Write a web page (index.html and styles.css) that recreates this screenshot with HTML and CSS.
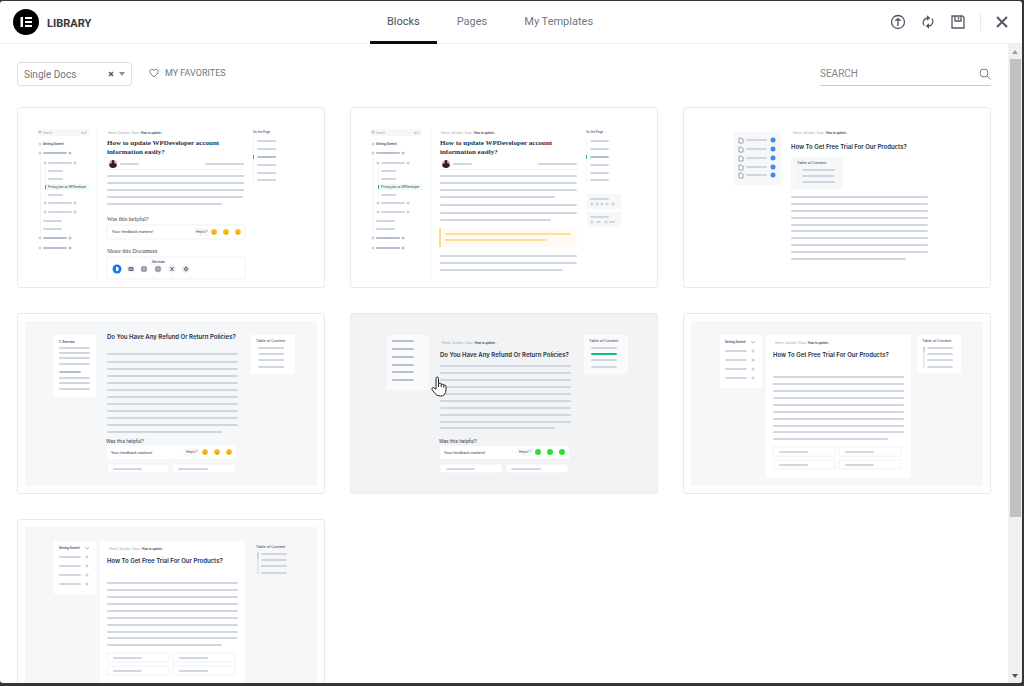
FILE: index.html
```html
<!DOCTYPE html>
<html lang="en">
<head>
<meta charset="utf-8">
<title>Library</title>
<link rel="stylesheet" href="styles.css">
</head>
<body>
<svg class="defs" aria-hidden="true">
  <symbol id="crumbs" viewBox="0 0 60 8" overflow="visible">
    <text class="tiny muted" x="0" y="5">Home / Articles / Docs /</text>
    <text class="tiny strong" x="33" y="5">How to update...</text>
  </symbol>
  <symbol id="emoji" viewBox="0 0 8 8">
    <circle cx="4" cy="4" r="3" fill="currentColor"/>
    <path class="face" d="M3 3v.6M5 3v.6M2.8 5q1.2 1 2.4 0"/>
  </symbol>
  <symbol id="doc-side" viewBox="0 0 292 165">
    <rect class="tint" x="12" y="14" width="52" height="7"/>
    <circle class="ring" cx="15" cy="17" r="1"/>
    <text class="tiny muted" x="18" y="19">Search</text>
    <text class="tiny muted" x="56" y="19">⌘ K</text>
    <path class="dots" d="M15 29h0M15 38h0M20 48h0M20 88h0M20 97h0M15 123h0M15 133h0"/>
    <text class="tiny strong" x="18" y="30">Getting Started</text>
    <path class="bar dark" d="M19 38h22M19 123h22M19 133h22"/>
    <path class="dots dark" d="M45 38h0M45 123h0M45 133h0"/>
    <path class="bar" d="M24 48h22M24 56h13M24 64h13M24 80h13M24 88h22M24 97h22M19 106h17M19 114h17"/>
    <path class="dots" d="M50 48h0M50 88h0M50 97h0"/>
    <path class="rule" d="M20.500 51v31M15.500 42v77M72.500 14v151"/>
    <rect class="green-tint" x="20" y="69" width="44" height="6"/>
    <rect class="green" x="20" y="70" width="1" height="4"/>
    <text class="tiny green-text" x="23" y="73">Pricing plan as WPDeveloper</text>
    <use href="#crumbs" x="83" y="14" width="60" height="8"/>
    <text class="serif title" x="82" y="30">How to update WPDeveloper account</text>
    <text class="serif title" x="82" y="39">information easily?</text>
    <circle cx="88" cy="49" r="4" fill="#f3a5ab"/>
    <path d="M84 50q1-2 3-2-1-3 1-3t1 3q2 0 3 2-1 3-4 3t-4-3z" fill="#2b2230"/>
    <path class="bar" d="M96 49h17M181 49h37"/>
    <path class="rule" d="M82 54.500h137"/>
    <text class="tiny" x="228" y="18">On this Page</text>
    <path class="bar" d="M233 26h17M233 34h17M233 50h17M233 58h17M233 65h17"/>
    <path class="bar dark" d="M233 42h17"/>
    <path class="rule" d="M228.500 23v44"/>
    <rect class="green" x="228" y="40" width="1" height="4"/>
  </symbol>
  <symbol id="feedback" viewBox="0 0 140 50" overflow="visible">
    <text class="sub" x="0" y="6">Was this helpful?</text>
    <rect class="paper" x="1" y="9" width="129" height="13"/>
    <text class="small" x="5" y="17">Your feedback matters!</text>
    <rect class="tip" x="78" y="12" width="15" height="6" rx="1"/>
    <text class="tiny" x="80" y="16">Helpful ?</text>
    <use href="#emoji" x="95" y="11" width="8" height="8"/>
    <use href="#emoji" x="107" y="11" width="8" height="8"/>
    <use href="#emoji" x="119" y="11" width="8" height="8"/>
    <rect class="paper edge" x="1" y="27" width="62" height="9" rx="1"/>
    <rect class="paper edge" x="67" y="27" width="62" height="9" rx="1"/>
    <path class="bar" d="M8 32h27M73 32h28"/>
  </symbol>
  <symbol id="trial-doc" viewBox="0 0 292 165">
    <rect class="tint" width="292" height="165"/>
    <rect class="paper" x="29" y="14" width="42" height="53"/>
    <text class="tiny strong" x="34" y="22">Getting Started</text>
    <path class="ring" d="M60 20l2 2 2-2"/>
    <path class="bar" d="M35 30h20M35 39h20M35 48h20M35 57h20"/>
    <path class="dots" d="M62 30h0M62 39h0M62 48h0M62 57h0"/>
    <rect class="paper" x="75" y="14" width="145" height="143"/>
    <use href="#crumbs" x="84" y="18" width="60" height="8"/>
    <text class="title" x="82" y="36">How To Get Free Trial For Our Products?</text>
    <path class="bar" d="M83 56h129M83 63h129M83 70h129M83 77h129M83 84h129M83 91h129M83 98h129M83 105h129M83 111h129M83 118h113"/>
    <rect class="paper edge" x="82" y="126" width="62" height="9" rx="1"/>
    <rect class="paper edge" x="148" y="126" width="62" height="9" rx="1"/>
    <rect class="paper edge" x="82" y="139" width="62" height="9" rx="1"/>
    <rect class="paper edge" x="148" y="139" width="62" height="9" rx="1"/>
    <path class="bar" d="M89 131h27M155 131h27M89 144h27M155 144h27"/>
  </symbol>
  <symbol id="side-toc" viewBox="0 0 292 165">
    <text class="small" x="231" y="21">Table of Content</text>
    <path class="bar" d="M237 27h24M237 33h24M237 39h24M237 46h24"/>
    <path class="bar thin" d="M233 26v21"/>
    <path class="bar thin dark" d="M233 26v5"/>
  </symbol>
</svg>

<main class="modal">
  <header class="header">
    <div class="brand">
      <svg class="logo" viewBox="0 0 26 26" aria-hidden="true"><circle cx="13" cy="13" r="13"/><path d="M7.500 8h2.500v10H7.500zM12 8h7v2h-7zM12 12h7v2h-7zM12 16h7v2h-7z" fill="#fff"/></svg>
      <h1 class="brand-name">LIBRARY</h1>
    </div>
    <nav class="tabs">
      <a class="tab active" href="#blocks" aria-current="page">Blocks</a>
      <a class="tab" href="#pages">Pages</a>
      <a class="tab" href="#templates">My Templates</a>
    </nav>
    <div class="actions">
      <button class="icon-btn" aria-label="Import template"><svg viewBox="0 0 16 16"><circle cx="8" cy="8" r="6.500"/><path d="M8 12V5M6 6.200L8 4.500l2 1.700z"/></svg></button>
      <button class="icon-btn" aria-label="Sync library"><svg viewBox="0 0 16 16"><path d="M4 11.500C2 8.500 3.500 4.500 7.500 4M12 4.500c2 3 .5 7-3.500 7.500"/><path class="solid" d="M7 1.200v5.600L10.300 4zM9 9.200v5.600L5.700 12z"/></svg></button>
      <button class="icon-btn" aria-label="Save template"><svg viewBox="0 0 16 16"><path d="M2 2h10.500L14 3.500V14H2zM5 2v5h6V2M8.500 3v2.500"/></svg></button>
      <button class="icon-btn close" aria-label="Close"><svg viewBox="0 0 16 16"><path d="M3 3l10 10M13 3L3 13"/></svg></button>
    </div>
  </header>

  <div class="body">
    <div class="content">
      <div class="filters">
        <div class="picker">
          <select class="picker-select" aria-label="Category"><option>Single Docs</option></select>
          <button class="clear" aria-label="Clear category"><svg viewBox="0 0 6 6"><path d="M1 1l4 4M5 1L1 5"/></svg></button>
          <svg class="caret" viewBox="0 0 6 4" aria-hidden="true"><path d="M0 0h6L3 4z"/></svg>
        </div>
        <button class="favorites"><svg viewBox="0 0 10 10" aria-hidden="true"><path d="M5 8.800C-1 4.500.8 1.300 2.800 1.300 4 1.300 4.700 2 5 2.700 5.300 2 6 1.300 7.200 1.300 9.200 1.300 11 4.500 5 8.800z"/></svg>MY FAVORITES</button>
        <div class="search">
          <input class="search-input" type="search" placeholder="SEARCH" aria-label="Search">
          <svg viewBox="0 0 12 12" aria-hidden="true"><circle cx="5" cy="5" r="4"/><path d="M8 8l3.500 3.500"/></svg>
        </div>
      </div>

      <div class="grid">
        <button class="card" aria-label="Documentation with feedback and sharing">
          <svg class="thumb" viewBox="0 0 292 165">
            <use href="#doc-side" width="292" height="165"/>
            <path class="bar" d="M83 61h135M83 68h135M83 75h135M83 82h134M83 89h113"/>
            <text class="serif heading" x="82" y="106">Was this helpful?</text>
            <rect class="edge" x="82" y="110" width="138" height="14" rx="1"/>
            <text class="small" x="87" y="118">Your feedback matters!</text>
            <rect class="tip" x="169" y="114" width="15" height="6" rx="1"/>
            <text class="tiny" x="171" y="118">Helpful ?</text>
            <use class="yellow" href="#emoji" x="185" y="113" width="8" height="8"/>
            <use class="yellow" href="#emoji" x="197" y="113" width="8" height="8"/>
            <use class="yellow" href="#emoji" x="209" y="113" width="8" height="8"/>
            <text class="serif heading" x="82" y="138">Share this Document</text>
            <rect class="edge" x="82" y="142" width="138" height="22" rx="1"/>
            <circle cx="92" cy="154" r="4.500" fill="#1877f2"/>
            <path d="M91 152h2v1h1l-1 3h-2z" fill="#fff"/>
            <g class="share-icons">
              <circle cx="106" cy="154" r="4"/><circle cx="119" cy="154" r="4"/><circle cx="133" cy="154" r="4"/><circle cx="147" cy="154" r="4"/><circle cx="161" cy="154" r="4"/>
              <path d="M104 152.500h4v3h-4zM104 154h4M117 152h4v4h-4zM119 153v2M131 152h4v4h-4zM132 155l2-2M145.500 152l3 4M148.500 152l-3 4M159 154q2-4 4 0-2 4-4 0M161 153v2"/>
            </g>
            <rect class="tip" x="126" y="145" width="14" height="4" rx="1"/>
            <text class="tiny strong" x="127" y="148">See more</text>
          </svg>
        </button>

        <button class="card" aria-label="Documentation with callout">
          <svg class="thumb" viewBox="0 0 292 165">
            <use href="#doc-side" width="292" height="165"/>
            <path class="bar" d="M83 61h135M83 68h135M83 75h135M83 82h113M83 90h135M83 98h135M83 105h109M83 141h135M83 148h135M83 155h121"/>
            <rect x="81" y="113" width="138" height="19" fill="#fffbf2"/>
            <rect x="81" y="113" width="2" height="19" fill="#ffd98a"/>
            <path class="bar amber" d="M88 119h124M88 125h100"/>
            <rect class="tint" x="229" y="79" width="34" height="15"/>
            <rect class="tint" x="229" y="97" width="34" height="15"/>
            <path class="bar" d="M233 84h17M233 102h17M239 107h3M252 107h4"/>
            <path class="dots" d="M234 89h0M239 89h0M244 89h0M249 89h0M255 89h0M234 107h0M248 107h0"/>
          </svg>
        </button>

        <button class="card" aria-label="Documentation with contents box">
          <svg class="thumb" viewBox="0 0 292 165">
            <rect class="tint" x="43" y="17" width="47" height="53"/>
            <path class="folder" d="M48 23h2l1 1h1v4h-4zM48 32h2l1 1h1v4h-4zM48 41h2l1 1h1v4h-4zM48 50h2l1 1h1v4h-4zM48 58h2l1 1h1v4h-4z"/>
            <path class="bar" d="M56 25h19M56 34h19M56 43h19M56 52h19M56 60h19"/>
            <path class="dots blue" d="M82 25h0M82 34h0M82 43h0M82 52h0M82 60h0"/>
            <use href="#crumbs" x="102" y="14" width="60" height="8"/>
            <text class="title" x="100" y="34">How To Get Free Trial For Our Products?</text>
            <rect class="tint" x="100" y="42" width="52" height="32"/>
            <text class="small" x="106" y="49">Table of Content</text>
            <path class="bar" d="M112 55h31M112 61h31M112 67h31"/>
            <path class="bar thin" d="M108 55h0M108 61h0M108 67h0"/>
            <path class="bar" d="M101 82h135M101 89h135M101 96h135M101 103h135M101 110h135M101 116h135M101 123h135M101 130h135M101 137h135M101 144h113"/>
          </svg>
        </button>

        <button class="card" aria-label="Refund policies with overview">
          <svg class="thumb" viewBox="0 0 292 165">
            <rect class="tint" width="292" height="165"/>
            <rect class="paper" x="29" y="14" width="42" height="62"/>
            <text class="tiny strong" x="34" y="22">2. Overview</text>
            <path class="bar" d="M35 27h29M35 32h29M35 37h29M35 43h29M35 57h29M35 62h29M35 68h29"/>
            <path class="bar dark" d="M35 51h20"/>
            <text class="title" x="82" y="18">Do You Have Any Refund Or Return Policies?</text>
            <path class="bar" d="M83 33h129M83 41h129M83 48h129M83 55h129M83 62h129M83 69h129M83 76h129M83 83h129M83 90h129M83 97h129M83 104h129M83 111h113"/>
            <use class="yellow" href="#feedback" x="81" y="116" width="140" height="50"/>
            <rect class="paper" x="226" y="14" width="44" height="39"/>
            <text class="small" x="231" y="21">Table of Content</text>
            <path class="bar" d="M234 27h24M234 33h24M234 39h24M234 46h24"/>
          </svg>
        </button>

        <button class="card hovered" aria-label="Refund policies with breadcrumbs">
          <svg class="thumb" viewBox="0 0 292 165">
            <rect class="paper" x="29" y="14" width="42" height="55"/>
            <path class="bar dark" d="M35 20h20M35 28h20M35 36h20M35 44h20M35 51h20M35 59h20"/>
            <use href="#crumbs" x="84" y="18" width="60" height="8"/>
            <text class="title" x="82" y="36">Do You Have Any Refund Or Return Policies?</text>
            <path class="bar" d="M83 45h129M83 52h129M83 59h129M83 66h129M83 73h129M83 80h129M83 87h129M83 94h129M83 101h129M83 107h113"/>
            <use class="lime" href="#feedback" x="81" y="116" width="140" height="50"/>
            <rect class="paper" x="226" y="14" width="44" height="39"/>
            <text class="small" x="231" y="21">Table of Content</text>
            <path class="bar" d="M234 27h24M234 39h24M234 46h24"/>
            <path class="bar active-bar" d="M234 33h24"/>
          </svg>
          <svg class="pointer" viewBox="0 0 16 21" aria-hidden="true"><path d="M5 13V2.500Q5 1 6.200 1T7.500 2.500V7.500Q10 6.500 10.200 8.300 12.400 7.500 12.700 9.200 15 8.500 15 10.500V14Q14.500 20 9.500 20 5.500 20 4 17.500L1 13.500Q.5 11.500 2.500 11.500L5 13.500M7.500 7.500V11M10.200 8.300V11M12.700 9.200V11.500"/></svg>
        </button>

        <button class="card" aria-label="Free trial with boxed contents">
          <svg class="thumb" viewBox="0 0 292 165">
            <use href="#trial-doc" width="292" height="165"/>
            <rect class="paper" x="226" y="14" width="44" height="38"/>
            <use href="#side-toc" width="292" height="165"/>
          </svg>
        </button>

        <button class="card" aria-label="Free trial with plain contents">
          <svg class="thumb" viewBox="0 0 292 165">
            <use href="#trial-doc" width="292" height="165"/>
            <use href="#side-toc" width="292" height="165"/>
          </svg>
        </button>
      </div>
    </div>
    <div class="scrollbar" aria-hidden="true">
      <svg class="arrow up" viewBox="0 0 6 4"><path d="M0 4h6L3 0z"/></svg>
      <div class="track"><div class="thumb-bar"></div></div>
      <svg class="arrow" viewBox="0 0 6 4"><path d="M0 0h6L3 4z"/></svg>
    </div>
  </div>
</main>
</body>
</html>
```
FILE: styles.css
```css
* { box-sizing: border-box; }

body {
  margin: 0;
  height: 100vh;
  padding: 1px 2px 3px 0;
  background: #343536;
  font-family: Roboto, "Liberation Sans", sans-serif;
  color: #6d7882;
  overflow: hidden;
}

button {
  font: inherit;
  color: inherit;
  background: none;
  border: 0;
  padding: 0;
  cursor: pointer;
}

.defs { position: absolute; width: 0; height: 0; }

.modal {
  display: flex;
  flex-direction: column;
  height: 100%;
  background: #fff;
  border-radius: 3px;
  overflow: hidden;
}

/* Header */
.header {
  display: grid;
  grid-template-columns: 36% auto 1fr;
  flex: none;
  height: 43px;
  border-bottom: 1px solid #eceeef;
}

.brand {
  display: flex;
  align-items: center;
  gap: 8px;
  padding: 0 0 1px 13px;
}

.logo { width: 26px; height: 26px; }

.brand-name {
  margin: 0;
  padding-top: 3px;
  font-size: 11px;
  font-weight: 700;
  color: #34383c;
}

.tabs { display: flex; gap: 3px; padding-left: 2px; }

.tab {
  height: 43px;
  padding: 0 17px;
  line-height: 41px;
  font-size: 11px;
  color: #6d7882;
  text-decoration: none;
}

.tab.active {
  color: #495157;
  border-bottom: 3px solid #0c0d0e;
}

.actions {
  display: flex;
  justify-content: flex-end;
  align-items: center;
  gap: 14px;
  padding: 0 12px 1px 0;
}

.icon-btn { display: flex; align-items: center; height: 18px; }

.icon-btn svg {
  width: 16px;
  height: 16px;
  fill: none;
  stroke: #515962;
  stroke-width: 1.3;
}

.icon-btn .solid { fill: #515962; stroke: none; }

.icon-btn.close {
  padding-left: 13px;
  border-left: 1px solid #e6e9ec;
}

.icon-btn.close svg { stroke-width: 2; }

/* Body */
.body { display: flex; flex: 1; min-height: 0; }

.content { flex: 1; min-width: 0; padding: 18px 17px 0; overflow: hidden; }

.filters {
  display: flex;
  align-items: center;
  margin-bottom: 21px;
}

.picker {
  display: flex;
  align-items: center;
  width: 115px;
  height: 24px;
  padding: 0 6px;
  border: 1px solid #dcdfe2;
  border-radius: 3px;
}

.picker-select {
  flex: 1;
  min-width: 0;
  padding: 0;
  border: 0;
  appearance: none;
  background: none;
  font: 10px Roboto, "Liberation Sans", sans-serif;
  color: #6d7882;
}

.clear { display: flex; margin-right: 5px; }
.clear svg { width: 6px; height: 6px; stroke: #555d66; stroke-width: 1.5; }
.caret { width: 6px; height: 4px; fill: #8a8f94; }

.favorites {
  display: flex;
  align-items: center;
  gap: 6px;
  margin-left: 17px;
  padding-bottom: 2px;
  font-size: 9px;
}

.favorites svg { width: 10px; height: 10px; fill: none; stroke: #6d7882; }

.search {
  display: flex;
  align-items: center;
  width: 171px;
  height: 24px;
  margin-left: auto;
  border-bottom: 1px solid #c8cacc;
}

.search-input {
  flex: 1;
  min-width: 0;
  padding: 0;
  border: 0;
  outline: 0;
  background: none;
  font: 10px Roboto, "Liberation Sans", sans-serif;
}

.search-input::placeholder { color: #83878b; }
.search svg { width: 12px; height: 12px; fill: none; stroke: #7b8085; }

/* Template cards */
.grid {
  display: grid;
  grid-template-columns: repeat(3, 1fr);
  gap: 25px;
}

.card {
  position: relative;
  padding: 7px;
  border: 1px solid #e8eaec;
  border-radius: 3px;
}

.card.hovered { background: #f1f3f5; }

.thumb { display: block; width: 100%; height: auto; }

.pointer {
  position: absolute;
  top: 62px;
  left: 80px;
  width: 16px;
  height: 21px;
  fill: #fff;
  stroke: #222;
}

/* Thumbnail drawing */
.bar { fill: none; stroke: #d0d7e3; stroke-width: 2; stroke-linecap: round; }
.bar.dark { stroke: #b4bfd1; }
.bar.thin { stroke-width: 1; }
.bar.amber { stroke: #fbdf9f; }
.bar.active-bar { stroke: #10be85; }
.dots { stroke: #ccd2dc; stroke-width: 3; stroke-linecap: round; }
.dots.dark { stroke: #b4bfd1; }
.dots.blue { stroke: #4488f5; stroke-width: 5; }
.rule { stroke: #f1f3f5; fill: none; }
.ring { fill: none; stroke: #aab1bb; stroke-width: 1; }
.folder { fill: #fff; stroke: #9a9fa6; stroke-width: 1; }
.tint { fill: #f5f7f9; }
.paper { fill: #fff; }
.hovered .paper { fill: #fafafb; }
.edge { stroke: #f0f2f5; fill: #fff; }
.tip { fill: #fff; stroke: #f1f2f4; }
.green { fill: #25b881; }
.green-tint { fill: #eefaf5; }
.yellow { color: #fbc42e; }
.lime { color: #2fe438; }
.face { fill: none; stroke: #77551d; stroke-width: 1; opacity: .5; }
.share-icons circle { fill: #eef1f5; }
.share-icons path { fill: none; stroke: #5d6878; stroke-width: 1; }

.thumb text, symbol text { font-family: Roboto, sans-serif; fill: #3b4456; }
text.tiny { font-size: 3px; }
text.small { font-size: 4px; }
text.sub { font-size: 5px; }
.thumb text.muted, symbol text.muted { fill: #a5acb8; }
text.strong { font-weight: 500; }
symbol text.green-text { fill: #35564b; }
.thumb text.title, symbol text.title {
  font-family: Inter, sans-serif;
  font-size: 6px;
  font-weight: 600;
  fill: #263147;
}
.thumb text.serif, symbol text.serif { font-family: "Liberation Serif", serif; }
symbol text.serif.title { font-size: 7px; font-weight: 700; }
text.heading { font-size: 6px; font-weight: 400; }

/* Scrollbar */
.scrollbar {
  display: flex;
  flex-direction: column;
  align-items: center;
  width: 14px;
  padding: 6px 0 5px;
  background: #f1f1f2;
}

.arrow { width: 6px; height: 4px; fill: #555; }
.arrow.up { fill: #a0a0a0; }
.track { flex: 1; width: 11px; padding: 5px 0; }
.thumb-bar { height: 75%; background: #c1c1c1; }
```
